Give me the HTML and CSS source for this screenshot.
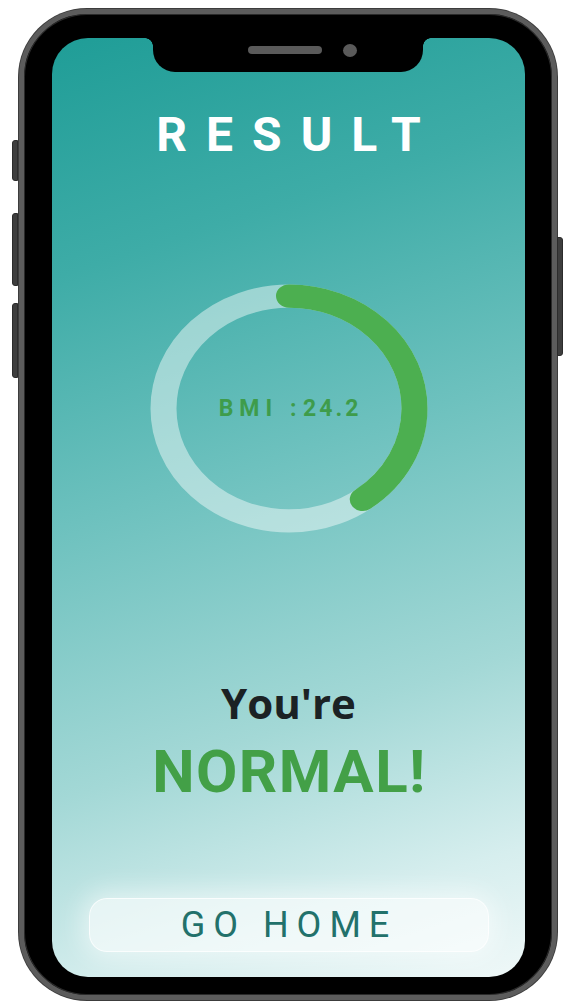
FILE: index.html
```html
<!DOCTYPE html>
<html lang="en">
<head>
<meta charset="utf-8">
<title>Result</title>
<link rel="stylesheet" href="styles.css">
</head>
<body>
<div class="stage">
  <div class="phone">
    <span class="side-btn side-btn--mute"></span>
    <span class="side-btn side-btn--vol-up"></span>
    <span class="side-btn side-btn--vol-down"></span>
    <span class="side-btn side-btn--power"></span>
    <div class="screen">
      <div class="notch">
        <span class="speaker"></span>
        <span class="camera"></span>
      </div>
      <h1 class="title">RESULT</h1>
      <div class="gauge">
        <svg class="gauge__svg" viewBox="0 0 278 278" preserveAspectRatio="none" aria-hidden="true">
          <circle class="gauge__track" cx="139" cy="139" r="125.5"></circle>
          <circle class="gauge__bar" cx="139" cy="139" r="125.5" pathLength="100" transform="rotate(-90 139 139)"></circle>
        </svg>
        <p class="gauge__label"><span class="gauge__key">BMI :</span> <span class="gauge__value">24.2</span></p>
      </div>
      <p class="verdict-lead">You're</p>
      <p class="verdict">NORMAL!</p>
      <button class="home-btn" type="button">GO HOME</button>
    </div>
  </div>
</div>
</body>
</html>
```
FILE: styles.css
```css
* { box-sizing: border-box; }

html, body {
  margin: 0;
  padding: 0;
  background: #ffffff;
}

body {
  font-family: Roboto, "Noto Sans", Arial, sans-serif;
}

.stage {
  padding: 9px 15px 4px 19px;
}

.phone {
  position: relative;
  width: 538px;
  height: 991px;
  border: 5px solid #5c5c5c;
  border-radius: 68px;
  background: #000000;
  padding: 24px 27px 18px 28px;
  box-shadow: 0 0 0 1px #3c3c3c, inset 0 0 0 1px #2a2a2a;
}

.side-btn {
  position: absolute;
  width: 6px;
  background: #3e3e3e;
  border: 1px solid #2c2c2c;
}

.side-btn--mute,
.side-btn--vol-up,
.side-btn--vol-down {
  left: -12px;
  border-radius: 3px 0 0 3px;
}

.side-btn--mute { top: 126px; height: 41px; }
.side-btn--vol-up { top: 199px; height: 73px; }
.side-btn--vol-down { top: 289px; height: 75px; }

.side-btn--power {
  right: -11px;
  top: 223px;
  height: 119px;
  width: 6px;
  border-radius: 0 3px 3px 0;
}

.screen {
  position: relative;
  height: 100%;
  border-radius: 36px;
  overflow: hidden;
  background: linear-gradient(162deg, #1f9d97 0%, #3eaca7 22%, #6dc1be 45%, #a3d8d6 70%, #d6eeee 88%, #eff8f8 100%);
  display: flex;
  flex-direction: column;
  align-items: center;
  padding: 73px 0 25px;
}

.notch {
  position: absolute;
  top: 0;
  left: 101px;
  width: 270px;
  height: 34px;
  background: #000000;
  border-radius: 0 0 22px 22px;
}

.notch::before,
.notch::after {
  content: "";
  position: absolute;
  top: 0;
  width: 8px;
  height: 8px;
}

.notch::before {
  left: -8px;
  background: radial-gradient(circle at 0 100%, transparent 7.5px, #000 8px);
}

.notch::after {
  right: -8px;
  background: radial-gradient(circle at 100% 100%, transparent 7.5px, #000 8px);
}

.speaker {
  position: absolute;
  left: 95px;
  top: 8px;
  width: 74px;
  height: 8px;
  border-radius: 4px;
  background: #5a5a5a;
}

.camera {
  position: absolute;
  left: 190px;
  top: 6px;
  width: 14px;
  height: 13px;
  border-radius: 50%;
  background: #5a5a5a;
}

.title {
  margin: 0;
  padding-left: 19px;
  font-family: Roboto, sans-serif;
  font-weight: 700;
  font-size: 48px;
  line-height: 1;
  letter-spacing: 19px;
  color: #ffffff;
}

.gauge {
  margin-top: 125px;
  width: 278px;
  height: 249px;
  display: grid;
  place-items: center;
}

.gauge__svg,
.gauge__label {
  grid-area: 1 / 1;
}

.gauge__svg {
  width: 278px;
  height: 249px;
  display: block;
}

.gauge__track {
  fill: none;
  stroke: rgba(255, 255, 255, 0.45);
  stroke-width: 26;
}

.gauge__bar {
  fill: none;
  stroke: #4caf50;
  stroke-width: 26;
  stroke-linecap: round;
  stroke-dasharray: 40 100;
}

.gauge__label {
  margin: 0;
  padding-left: 3px;
  font-family: Roboto, sans-serif;
  font-weight: 700;
  font-size: 23px;
  line-height: 1;
  word-spacing: -5px;
  color: #3e9c4b;
}

.gauge__key {
  letter-spacing: 6px;
  word-spacing: 0;
}

.gauge__value {
  letter-spacing: 3px;
}

.verdict-lead {
  margin: 149px 0 0;
  font-family: "Open Sans", sans-serif;
  font-weight: 700;
  font-size: 42px;
  line-height: 1;
  color: #1b2224;
}

.verdict {
  margin: 18px 0 0;
  padding-left: 2px;
  font-family: Roboto, sans-serif;
  font-weight: 700;
  font-size: 60px;
  line-height: 1;
  letter-spacing: 1.5px;
  color: #43a047;
}

.home-btn {
  margin-top: auto;
  width: 400px;
  height: 54px;
  border: 1px solid rgba(255, 255, 255, 0.75);
  border-radius: 18px;
  background: rgba(255, 255, 255, 0.6);
  box-shadow: 0 0 26px 6px rgba(255, 255, 255, 0.55);
  padding: 0 0 0 1px;
  font-family: Roboto, sans-serif;
  font-weight: 400;
  font-size: 36px;
  line-height: 1;
  letter-spacing: 8px;
  color: #22716b;
  cursor: pointer;
}
```
